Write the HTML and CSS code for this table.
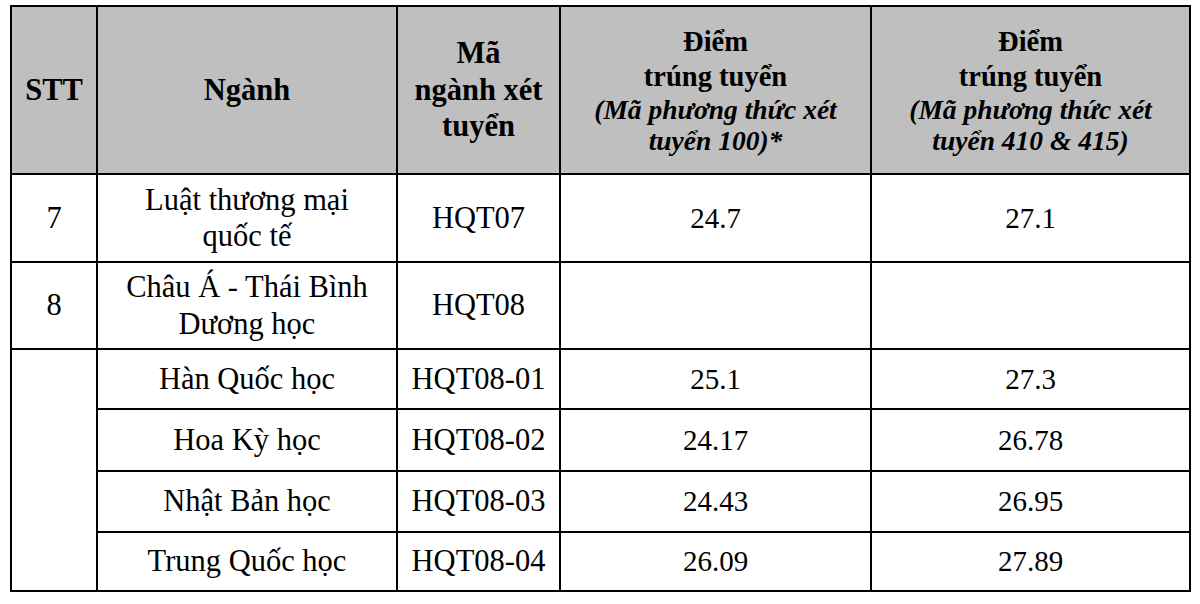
FILE: index.html
```html
<!DOCTYPE html>
<html lang="vi">
<head>
<meta charset="utf-8">
<title>Điểm trúng tuyển</title>
<link rel="stylesheet" href="styles.css">
</head>
<body>
<table class="scores">
  <colgroup>
    <col class="c-stt">
    <col class="c-nganh">
    <col class="c-ma">
    <col class="c-d1">
    <col class="c-d2">
  </colgroup>
  <thead>
    <tr class="head-row">
      <th class="h-big">STT</th>
      <th class="h-big">Ngành</th>
      <th class="h-big">Mã<br>ngành xét<br>tuyển</th>
      <th class="h-mid"><span class="h-line">Điểm</span><span class="h-line">trúng tuyển</span><em class="h-sub">(Mã phương thức xét<br>tuyển 100)*</em></th>
      <th class="h-mid"><span class="h-line">Điểm</span><span class="h-line">trúng tuyển</span><em class="h-sub">(Mã phương thức xét<br>tuyển 410 &amp; 415)</em></th>
    </tr>
  </thead>
  <tbody>
    <tr class="row-tall">
      <td>7</td>
      <td>Luật thương mại<br>quốc tế</td>
      <td>HQT07</td>
      <td class="num">24.7</td>
      <td class="num">27.1</td>
    </tr>
    <tr class="row-tall2">
      <td>8</td>
      <td>Châu Á - Thái Bình<br>Dương học</td>
      <td>HQT08</td>
      <td class="num"></td>
      <td class="num"></td>
    </tr>
    <tr class="row-a">
      <td rowspan="4"></td>
      <td>Hàn Quốc học</td>
      <td>HQT08-01</td>
      <td class="num">25.1</td>
      <td class="num">27.3</td>
    </tr>
    <tr class="row-b">
      <td>Hoa Kỳ học</td>
      <td>HQT08-02</td>
      <td class="num">24.17</td>
      <td class="num">26.78</td>
    </tr>
    <tr class="row-c">
      <td>Nhật Bản học</td>
      <td>HQT08-03</td>
      <td class="num">24.43</td>
      <td class="num">26.95</td>
    </tr>
    <tr class="row-d">
      <td>Trung Quốc học</td>
      <td>HQT08-04</td>
      <td class="num">26.09</td>
      <td class="num">27.89</td>
    </tr>
  </tbody>
</table>
</body>
</html>
```

FILE: styles.css
```css
html, body {
  background: #ffffff;
}
body {
  margin: 5px 0 0 10px;
  font-family: "Liberation Serif", "Times New Roman", serif;
  color: #000;
}
.scores {
  border-collapse: collapse;
  table-layout: fixed;
  width: 1179px;
  border: 2px solid #000;
}
.c-stt { width: 86px; }
.c-nganh { width: 300px; }
.c-ma { width: 163px; }
.c-d1 { width: 311px; }
.c-d2 { width: 319px; }
.scores th,
.scores td {
  border: 2px solid #000;
  padding: 0 2px;
  text-align: center;
  vertical-align: middle;
}
.scores th {
  background: #bfbfbf;
  font-weight: bold;
}
.h-big {
  font-size: 30.5px;
  line-height: 36.5px;
}
.h-mid {
  font-size: 28.5px;
  line-height: 35px;
  padding-top: 8px;
}
.h-line {
  display: block;
}
.h-sub {
  display: block;
  font-style: italic;
  font-size: 27.5px;
  line-height: 31.5px;
}
.scores td {
  font-size: 30.5px;
  line-height: 36.5px;
}
.scores td.num {
  font-size: 29px;
}
.head-row { height: 168px; }
.row-tall { height: 88px; }
.row-tall2 { height: 87px; }
.row-a { height: 60px; }
.row-b { height: 62px; }
.row-c { height: 61px; }
.row-d { height: 59px; }
```
